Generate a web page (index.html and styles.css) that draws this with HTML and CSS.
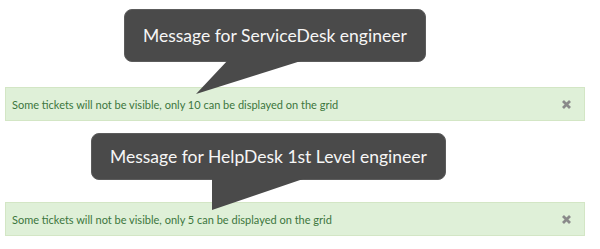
FILE: index.html
```html
<!DOCTYPE html>
<html lang="en">
<head>
	<meta charset="utf-8">
	<title>Grid limit messages</title>
	<link rel="stylesheet" href="styles.css">
</head>
<body>
	<div class="page">
		<section class="note note-sd">
			<div class="bubble">
				Message for ServiceDesk engineer
				<svg class="tail" width="180" height="35" viewBox="0 0 180 35"><polygon points="104,0 72,34 180,0"/></svg>
			</div>
			<div class="alert">
				<span class="msg">Some tickets will not be visible, only 10 can be displayed on the grid</span>
				<svg class="close" width="11" height="11" viewBox="0 0 11 11"><path d="M2 2 L9 9 M9 2 L2 9"/></svg>
			</div>
		</section>
		<section class="note note-hd">
			<div class="bubble">
				Message for HelpDesk 1st Level engineer
				<svg class="tail" width="215" height="33" viewBox="0 0 215 33"><polygon points="121,0 121,32 215,0"/></svg>
			</div>
			<div class="alert">
				<span class="msg">Some tickets will not be visible, only 5 can be displayed on the grid</span>
				<svg class="close" width="11" height="11" viewBox="0 0 11 11"><path d="M2 2 L9 9 M9 2 L2 9"/></svg>
			</div>
		</section>
	</div>
</body>
</html>
```

FILE: styles.css
```css
*{
	margin: 0;
	padding: 0;
}
body{
	background: #fff;
	font-family: Lato, "Open Sans", "Liberation Sans", sans-serif;
}
.page{
	width: 580px;
	padding: 9px 0 0 5px;
}
.note{
	display: flex;
	flex-direction: column;
	align-items: flex-start;
}
.bubble{
	position: relative;/*尾巴相对气泡定位*/
	z-index: 2;
	background: #4a4a4a;
	border: 1px solid #5c5c5c;
	border-radius: 8px;
	color: #f6f6f6;
	font-size: 17.5px;
	display: flex;
	align-items: center;
	padding: 0 18px;
}
.tail{
	position: absolute;
	left: -1px;
	top: calc(100% - 1px);
	fill: #4a4a4a;
}
.note-sd .bubble{
	margin-left: 119px;
	height: 51px;
}
.note-sd .alert{
	margin-top: 25px;
}
.note-hd{
	margin-top: 12px;
}
.note-hd .bubble{
	margin-left: 86px;
	height: 45px;
}
.note-hd .alert{
	margin-top: 22px;
}
.alert{
	align-self: stretch;
	height: 34px;
	box-sizing: border-box;
	background: #dff0d8;
	border: 1px solid #d3e6c5;
	color: #3c763d;
	font-size: 11px;
	display: flex;
	align-items: center;
	justify-content: space-between;
	padding: 1px 12px 0 6px;
}
.close{
	stroke: #8a8a8a;
	stroke-width: 2.8;
}
```
